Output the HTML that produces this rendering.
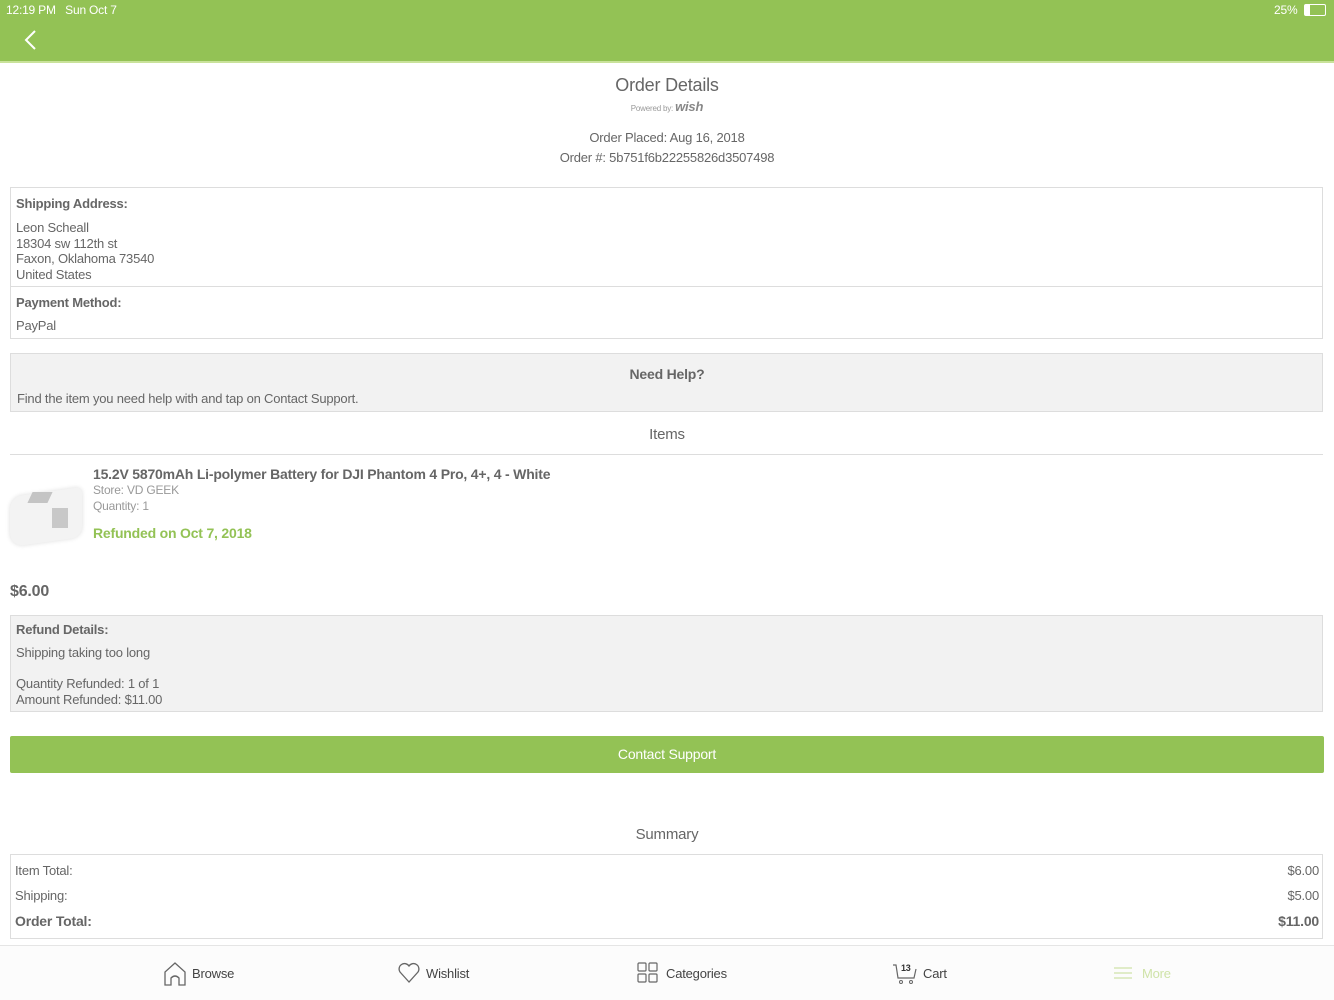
<!DOCTYPE html><html><head><meta charset="utf-8"><style>
body{margin:0;width:1334px;height:1000px;position:relative;background:#fff;font-family:"Liberation Sans",sans-serif;color:#666;overflow:hidden;letter-spacing:-0.2px}
.a{position:absolute;white-space:nowrap}
.box{position:absolute;left:10px;width:1313px;border:1px solid #ddd;box-sizing:border-box}
.b{font-weight:bold;color:#666}
</style></head><body>
<div class="a" style="left:0;top:0;width:1334px;height:61px;background:#93c255"></div>
<div class="a" style="left:0;top:61px;width:1334px;height:2px;background:#c9e29a"></div>
<div class="a" style="left:6px;top:3px;font-size:12px;color:#fff">12:19 PM&nbsp;&nbsp; Sun Oct 7</div>
<div class="a" style="left:1274px;top:3px;font-size:12px;color:#fff">25%</div>
<div class="a" style="left:1304px;top:4px;width:20px;height:10px;border:1px solid #fff;border-radius:2px"><div style="width:5px;height:10px;background:#fff"></div></div>
<svg class="a" style="left:22px;top:29px" width="16" height="24"><path d="M13 2 L4 11 L13 20" stroke="#fff" stroke-width="2" fill="none"/></svg>
<div class="a" style="left:0;width:1334px;text-align:center;top:75px;font-size:18px;color:#666">Order Details</div>
<div class="a" style="left:0;width:1334px;text-align:center;top:99px;font-size:8px;color:#999">Powered by: <span style="font-size:13px;font-weight:bold;font-style:italic;color:#888">wish</span></div>
<div class="a" style="left:0;width:1334px;text-align:center;top:130px;font-size:13px">Order Placed: Aug 16, 2018</div>
<div class="a" style="left:0;width:1334px;text-align:center;top:150px;font-size:13px">Order #: 5b751f6b22255826d3507498</div>
<div class="box" style="top:187px;height:152px"></div>
<div class="a" style="left:10px;top:286px;width:1313px;height:1px;background:#ddd"></div>
<div class="a b" style="left:16px;top:196px;font-size:13px">Shipping Address:</div>
<div class="a" style="left:16px;top:220px;font-size:13px;line-height:15.7px">Leon Scheall<br>18304 sw 112th st<br>Faxon, Oklahoma 73540<br>United States</div>
<div class="a b" style="left:16px;top:295px;font-size:13px">Payment Method:</div>
<div class="a" style="left:16px;top:318px;font-size:13px">PayPal</div>
<div class="box" style="top:353px;height:59px;background:#f2f2f2"></div>
<div class="a b" style="left:0;width:1334px;text-align:center;top:366px;font-size:14px">Need Help?</div>
<div class="a" style="left:17px;top:391px;font-size:13px">Find the item you need help with and tap on Contact Support.</div>
<div class="a" style="left:0;width:1334px;text-align:center;top:426px;font-size:15px">Items</div>
<div class="a" style="left:10px;top:454px;width:1313px;height:1px;background:#ddd"></div>
<div class="a" style="left:10px;top:492px;width:72px;height:50px;background:#f3f3f3;border-radius:12px 6px 10px 14px;box-shadow:0 0 5px #ddd;transform:skewY(-8deg)"></div>
<div class="a" style="left:30px;top:492px;width:20px;height:11px;background:#c4c4c4;transform:skewX(-25deg)"></div>
<div class="a" style="left:52px;top:508px;width:16px;height:20px;background:#c8c8c8"></div>
<div class="a" style="left:93px;top:466px;font-size:14px;font-weight:bold;color:#666">15.2V 5870mAh Li-polymer Battery for DJI Phantom 4 Pro, 4+, 4 - White</div>
<div class="a" style="left:93px;top:483px;font-size:12px;color:#999">Store: VD GEEK</div>
<div class="a" style="left:93px;top:499px;font-size:12px;color:#999">Quantity: 1</div>
<div class="a" style="left:93px;top:525px;font-size:14px;font-weight:bold;color:#93c255">Refunded on Oct 7, 2018</div>
<div class="a b" style="left:10px;top:583px;font-size:16px">$6.00</div>
<div class="box" style="top:615px;height:97px;background:#f2f2f2"></div>
<div class="a b" style="left:16px;top:622px;font-size:13px">Refund Details:</div>
<div class="a" style="left:16px;top:645px;font-size:13px">Shipping taking too long</div>
<div class="a" style="left:16px;top:676px;font-size:13px;line-height:16px">Quantity Refunded: 1 of 1<br>Amount Refunded: $11.00</div>
<div class="a" style="left:10px;top:736px;width:1314px;height:37px;background:#93c255;border-radius:2px;color:#fff;font-size:14px;text-align:center;line-height:37px">Contact Support</div>
<div class="a" style="left:0;width:1334px;text-align:center;top:826px;font-size:15px">Summary</div>
<div class="box" style="top:854px;height:85px"></div>
<div class="a" style="left:15px;top:863px;font-size:13px">Item Total:</div>
<div class="a" style="right:15px;top:863px;font-size:13px">$6.00</div>
<div class="a" style="left:15px;top:888px;font-size:13px">Shipping:</div>
<div class="a" style="right:15px;top:888px;font-size:13px">$5.00</div>
<div class="a b" style="left:15px;top:913px;font-size:14px">Order Total:</div>
<div class="a b" style="right:15px;top:913px;font-size:14px">$11.00</div>
<div class="a" style="left:0;top:945px;width:1334px;height:1px;background:#e5e5e5"></div>
<div class="a" style="left:0;top:946px;width:1334px;height:54px;background:#fcfcfc"></div>
<svg class="a" style="left:163px;top:961px" width="24" height="26"><path d="M2 24 V11 L12 2 L22 11 V24 H16 V17 Q12 13 8 17 V24 Z" stroke="#666" fill="none" stroke-width="1.3"/></svg>
<div class="a" style="left:192px;top:966px;font-size:13px;color:#444">Browse</div>
<svg class="a" style="left:397px;top:962px" width="24" height="22"><path d="M12 20 L3 10 A5 5 0 0 1 12 4 A5 5 0 0 1 21 10 Z" stroke="#666" fill="none" stroke-width="1.3"/></svg>
<div class="a" style="left:426px;top:966px;font-size:13px;color:#444">Wishlist</div>
<svg class="a" style="left:637px;top:962px" width="22" height="22"><g stroke="#666" fill="none" stroke-width="1.2"><rect x="1" y="1" width="8" height="8" rx="1"/><rect x="12" y="1" width="8" height="8" rx="1"/><rect x="1" y="12" width="8" height="8" rx="1"/><rect x="12" y="12" width="8" height="8" rx="1"/></g></svg>
<div class="a" style="left:666px;top:966px;font-size:13px;color:#444">Categories</div>
<svg class="a" style="left:892px;top:960px" width="26" height="26"><path d="M1 5 H4 L6 18 H22 L24 9" stroke="#666" fill="none" stroke-width="1.2"/><circle cx="9" cy="22" r="1.5" stroke="#666" fill="none"/><circle cx="19" cy="22" r="1.5" stroke="#666" fill="none"/><text x="9" y="11" font-size="9" font-weight="bold" fill="#333" font-family="Liberation Sans">13</text></svg>
<div class="a" style="left:923px;top:966px;font-size:13px;color:#444">Cart</div>
<svg class="a" style="left:1114px;top:966px" width="20" height="14"><g stroke="#cfe3a8" stroke-width="1.3"><path d="M0 2H18M0 7H18M0 12H18"/></g></svg>
<div class="a" style="left:1142px;top:966px;font-size:13px;color:#cfe3a8">More</div>
</body></html>
